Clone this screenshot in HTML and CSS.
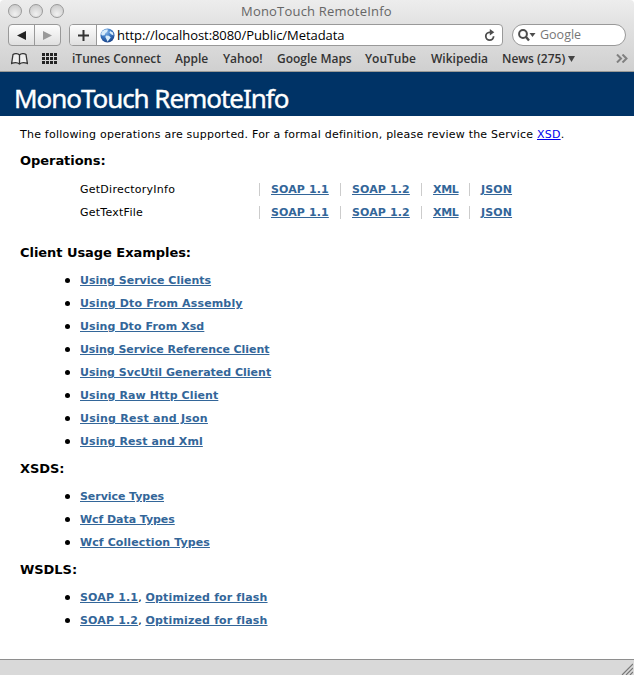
FILE: index.html
```html
<!DOCTYPE html>
<html lang="en">
<head>
<meta charset="utf-8">
<title>MonoTouch RemoteInfo</title>
<link rel="stylesheet" href="styles.css">
</head>
<body>
<div class="window">
  <header class="chrome">
    <div class="titlebar">
      <div class="lights"><i></i><i></i><i></i></div>
      <span class="window-title">MonoTouch RemoteInfo</span>
    </div>
    <div class="toolbar">
      <div class="nav">
        <span class="nav-btn"><svg width="9" height="9" viewBox="0 0 9 9"><path d="M0 4.5 9 0v9z" fill="#222"/></svg></span>
        <span class="nav-btn"><svg width="9" height="9" viewBox="0 0 9 9"><path d="M9 4.5 0 0v9z" fill="#999"/></svg></span>
      </div>
      <div class="address">
        <span class="plus"><svg width="11" height="11" viewBox="0 0 11 11"><path d="M5.5 0v11M0 5.5h11" stroke="#333" stroke-width="2"/></svg></span>
        <svg class="globe" width="15" height="15" viewBox="0 0 15 15"><defs><radialGradient id="g" cx=".4" cy=".25" r=".8"><stop offset="0" stop-color="#8abaea"/><stop offset=".5" stop-color="#3976c0"/><stop offset="1" stop-color="#193f83"/></radialGradient></defs><circle cx="7.5" cy="7.5" r="7" fill="url(#g)"/><path d="M2 3.5Q5 1 8 1.7L7 4 5.5 5l-1 2.3L2 7.5 1 6zM6 7.5l3 .3 1.7 1.6-1.5 2-1.7 2.3-1-2.5L5.3 9zM10 3l3 1.5.5 3-2-1-2-1.7z" fill="#d9edfa"/></svg>
        <span class="url">http://localhost:8080/Public/Metadata</span>
        <svg class="reload" width="12" height="13" viewBox="0 0 12 13"><path d="M6.500 3.300H5.500A3.900 3.900 0 1 0 9.600 7.300" fill="none" stroke="#4d4d4d" stroke-width="1.800"/><path d="M5.800 0l4.500 3.300L5.800 6.600z" fill="#4d4d4d"/></svg>
      </div>
      <div class="search">
        <svg width="18" height="13" viewBox="0 0 18 13"><circle cx="5" cy="5" r="3.9" fill="none" stroke="#4d4d4d" stroke-width="2"/><path d="M7.8 7.8 11 11.5" stroke="#4d4d4d" stroke-width="2.4"/><path d="M11.5 4h6L14.500 8z" fill="#4d4d4d"/></svg>
        <span class="google">Google</span>
      </div>
    </div>
    <nav class="bookmarks">
      <svg class="book" width="17" height="12" viewBox="0 0 17 12"><path d="M8.500 2C7 .4 3.600.3 2 1.500L.6 10.500C3.500 9.300 6.500 9.300 8.500 11 10.500 9.300 13.500 9.300 16.400 10.500L15 1.500C13.400.3 10 .4 8.500 2zV11" fill="#eee" stroke="#333" stroke-width="1.300"/></svg>
      <svg class="tiles" width="16" height="11" viewBox="0 0 16 11"><path d="M0 1.500h16M0 5.500h16M0 9.500h16" stroke="#222" stroke-width="3" stroke-dasharray="3 1"/></svg>
      <span class="bm b1">iTunes Connect</span><span class="bm b2">Apple</span><span class="bm b3">Yahoo!</span><span class="bm b4">Google Maps</span><span class="bm b5">YouTube</span><span class="bm b6">Wikipedia</span><span class="bm b7">News (275)</span>
      <svg class="caret" width="7" height="6" viewBox="0 0 7 6"><path d="M0 0h7L3.500 6z" fill="#444"/></svg>
      <svg class="more" width="12" height="9" viewBox="0 0 12 9"><path d="M1 .5 5 4.500 1 8.500M6.500.5l4 4-4 4" fill="none" stroke="#808080" stroke-width="2"/></svg>
    </nav>
  </header>
  <h1 class="banner"><span>MonoTouch RemoteInfo</span></h1>
  <main class="page">
    <p class="intro">The following operations are supported. For a formal definition, please review the Service <a class="xsd" href="#">XSD</a>.</p>
    <h2>Operations:</h2>
    <div class="ops">
      <div class="op"><span class="op-name">GetDirectoryInfo</span><span class="cell soap"><a href="#">SOAP 1.1</a></span><span class="cell soap"><a href="#">SOAP 1.2</a></span><span class="cell xml"><a href="#">XML</a></span><span class="cell"><a href="#">JSON</a></span></div>
      <div class="op"><span class="op-name">GetTextFile</span><span class="cell soap"><a href="#">SOAP 1.1</a></span><span class="cell soap"><a href="#">SOAP 1.2</a></span><span class="cell xml"><a href="#">XML</a></span><span class="cell"><a href="#">JSON</a></span></div>
    </div>
    <h2>Client Usage Examples:</h2>
    <ul>
      <li><a href="#">Using Service Clients</a></li>
      <li class="wide"><a href="#">Using Dto From Assembly</a></li>
      <li class="roomy"><a href="#">Using Dto From Xsd</a></li>
      <li class="tight"><a href="#">Using Service Reference Client</a></li>
      <li><a href="#">Using SvcUtil Generated Client</a></li>
      <li class="roomy"><a href="#">Using Raw Http Client</a></li>
      <li class="wider"><a href="#">Using Rest and Json</a></li>
      <li class="roomy"><a href="#">Using Rest and Xml</a></li>
    </ul>
    <h2>XSDS:</h2>
    <ul>
      <li class="tight"><a href="#">Service Types</a></li>
      <li class="tight"><a href="#">Wcf Data Types</a></li>
      <li class="roomy"><a href="#">Wcf Collection Types</a></li>
    </ul>
    <h2>WSDLS:</h2>
    <ul>
      <li class="wide"><a href="#">SOAP 1.1</a>, <a href="#">Optimized for flash</a></li>
      <li class="wide"><a href="#">SOAP 1.2</a>, <a href="#">Optimized for flash</a></li>
    </ul>
  </main>
  <footer class="status"><svg width="12" height="12" viewBox="0 0 12 12"><path d="M1 12 12 1M5 12l7-7M9 12l3-3" stroke="#777" stroke-width="1.200"/></svg></footer>
</div>
</body>
</html>
```

FILE: styles.css
```css
* { box-sizing: border-box; }
body { margin: 0; background: #fff; }
svg { display: block; flex: none; }
.window { height: 675px; display: flex; flex-direction: column; overflow: hidden; font-family: "DejaVu Sans", sans-serif; }
.chrome { height: 72px; flex: none; background: linear-gradient(#ededed, #e2e2e2 24px, #d0d0d0); border-bottom: 1px solid #9a9a96; border-radius: 4px 4px 0 0; font-family: "Open Sans", sans-serif; white-space: nowrap; }
.titlebar { height: 24px; display: flex; padding: 4px 0 0 8px; }
.lights { display: flex; gap: 7px; width: 233px; flex: none; }
.lights i { width: 14px; height: 14px; border-radius: 50%; border: 1px solid #9a9a9a; background: radial-gradient(circle at 50% 75%, #f1f1f1, #c4c4c4); }
.window-title { font-size: 13px; line-height: 15px; color: #666; letter-spacing: .2px; }
.toolbar { height: 22px; display: flex; padding-left: 8px; }
.nav { display: flex; width: 53px; height: 22px; margin-right: 8px; border: 1px solid #999; border-radius: 4px; background: linear-gradient(#fdfdfd, #e0e0e0); }
.nav-btn { flex: 1; display: flex; align-items: center; justify-content: center; }
.nav-btn + .nav-btn { border-left: 1px solid #999; }
.address { width: 434px; height: 22px; display: flex; align-items: center; border: 1px solid #999; border-radius: 4px; background: #fff; overflow: hidden; }
.plus { width: 27px; height: 20px; display: flex; align-items: center; justify-content: center; border-right: 1px solid #999; background: linear-gradient(#fdfdfd, #e0e0e0); }
.globe { margin: 0 2px 0 3px; }
.url { font-size: 13px; line-height: 20px; color: #000; width: 367px; letter-spacing: -.06px; }
.search { width: 114px; height: 22px; margin-left: 9px; padding-left: 5px; display: flex; align-items: center; border: 1px solid #999; border-radius: 11px; background: #fff; }
.google { font-size: 12.5px; line-height: 22px; margin-left: 4px; color: #777; }
.bookmarks { height: 25px; display: flex; align-items: center; padding-left: 11px; font-size: 12px; font-weight: 600; color: #333; }
.tiles { margin: 0 14px 0 14px; }
.bm { flex: none; line-height: 24px; }
.b1 { width: 103px; }
.b2 { width: 48px; }
.b3 { width: 54px; }
.b4 { width: 88px; }
.b5 { width: 66px; }
.b6 { width: 71px; }
.b7 { width: 66px; }
.more { margin-left: 41px; }
.banner { height: 44px; flex: none; margin: 0; padding-left: 14px; background: #003366; color: #fff; font: 400 26px/53px "Noto Sans", sans-serif; letter-spacing: -1.05px; -webkit-text-stroke: .4px #fff; white-space: nowrap; }
.page { flex: 1; padding: 9px 20px 0; font-size: 11px; color: #000; white-space: nowrap; }
.intro { margin: 0; line-height: 19px; height: 18px; letter-spacing: .22px; }
.page h2 { margin: 0; font-size: 13px; line-height: 18px; font-weight: bold; letter-spacing: -.05px; }
.intro + h2 { margin-top: 9px; }
.ops { margin: 8px 0 20px 60px; }
.op { height: 23px; display: flex; align-items: center; }
.op-name { width: 179px; line-height: 14px; letter-spacing: .25px; }
.cell { height: 13px; line-height: 14px; border-left: 1px solid #ccc; padding-left: 11px; letter-spacing: .12px; }
.soap { width: 81px; }
.xml { width: 48px; letter-spacing: -.3px; }
a { color: #336699; font-weight: bold; text-underline-offset: 1px; }
a.xsd { color: #0000ee; font-weight: normal; }
ul { list-style: none; margin: 7px 0 7px 60px; padding: 0; }
li { height: 23px; line-height: 23px; display: block; }
li::before { content: ""; display: inline-block; width: 5px; height: 5px; margin: 0 10px 1px -15px; border-radius: 50%; background: #000; letter-spacing: 0; }
.tight { letter-spacing: -.06px; }
.roomy { letter-spacing: .1px; }
.wide { letter-spacing: .16px; }
.wider { letter-spacing: .24px; }
.status { height: 16px; flex: none; border-top: 1px solid #8e8e8e; background: #d9d9d9; display: flex; justify-content: flex-end; align-items: flex-end; padding-right: 1px; }
```
